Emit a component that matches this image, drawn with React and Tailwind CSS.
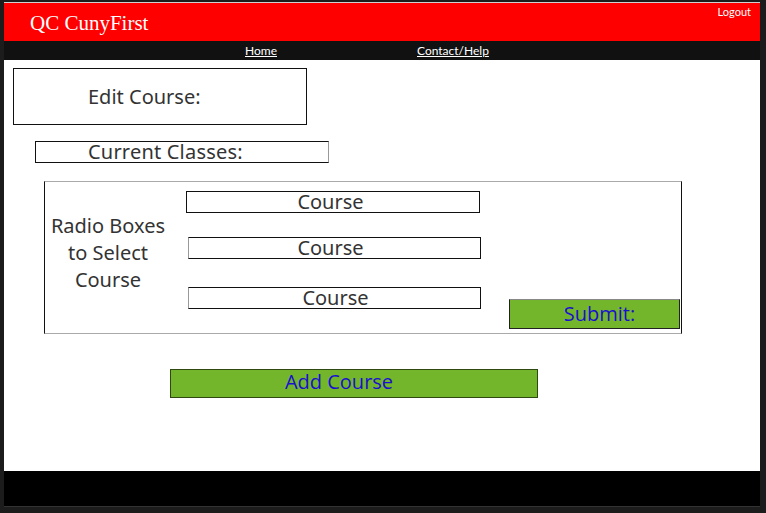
export default function App() {
  const sans = { fontFamily: '"Noto Sans", "Lato", sans-serif' };
  const btn = { fontFamily: '"Open Sans", "DejaVu Sans", sans-serif' };

  return (
    <div className="h-[513px] w-[766px] overflow-hidden bg-[#1c1c1c] pl-1 pr-[6px] pt-[2px]" style={sans}>
      <div className="border-t border-[#d0d0d0]">
        {/* red header */}
        <header className="flex h-[38px] items-start justify-between bg-[#ff0000]">
          <h1 className="ml-[26px] mt-[8px] text-[21px] leading-6 text-white" style={{ fontFamily: '"Liberation Serif", serif' }}>
            QC CunyFirst
          </h1>
          <a className="mr-[9px] mt-[1px] text-[11px] leading-4 text-white" style={{ fontFamily: '"Lato", sans-serif' }}>Logout</a>
        </header>

        {/* nav */}
        <nav className="flex h-[19px] items-center bg-[#111111] text-[12px] text-white" style={{ fontFamily: '"Lato", sans-serif' }}>
          <a className="ml-[241px] underline">Home</a>
          <a className="ml-[140px] underline">Contact/Help</a>
        </nav>

        {/* content */}
        <main className="flex h-[411px] flex-col items-start bg-white pt-[8px] text-[#333]">
          <div className="ml-[9px] flex h-[57px] w-[294px] items-center border border-[#111] pl-[74px] text-[20px]">
            Edit Course:
          </div>

          <div className="ml-[31px] mt-[16px] flex h-[22px] w-[294px] items-center border border-[#111] border-r-[#999] pl-[52px] text-[20px] tracking-[0.2px]">
            Current Classes:
          </div>

          <section className="ml-[40px] mt-[18px] flex h-[153px] w-[638px] border border-x-[#111] border-y-[#aaa]">
            <div className="flex w-[126px] flex-col items-center pt-[30px] text-center text-[20px] leading-[27px]">
              <span>Radio Boxes</span>
              <span>to Select</span>
              <span>Course</span>
            </div>
            <div className="ml-[15px] flex flex-col pt-[9px]">
              <div className="flex h-[22px] w-[294px] items-center justify-center border border-[#111] pr-[5px] text-[20px]">Course</div>
              <div className="ml-[2px] mt-[24px] flex h-[22px] w-[293px] items-center justify-center border border-[#111] border-l-[#999] pr-[8px] text-[20px]">Course</div>
              <div className="ml-[2px] mt-[28px] flex h-[22px] w-[293px] items-center justify-center border border-[#111] border-l-[#999] pl-[2px] text-[20px]">Course</div>
            </div>
            <div className="ml-[28px] mt-auto mb-[4px] flex h-[30px] w-[171px] items-center justify-center border border-[#222] border-t-[#888] bg-[#73b62b] pl-[10px] text-[20px] text-[#1a0fd0]" style={btn}>
              Submit:
            </div>
          </section>

          <div className="ml-[166px] mt-[35px] flex h-[29px] w-[368px] items-center justify-center border border-[#2e4a12] bg-[#73b62b] pb-[3px] pr-[30px] text-[20px] text-[#1a0fd0]" style={btn}>
            Add Course
          </div>
        </main>

        {/* footer */}
        <footer className="h-[35px] bg-black"></footer>
        <div className="h-[1px] bg-[#333]"></div>
      </div>
    </div>
  );
}
